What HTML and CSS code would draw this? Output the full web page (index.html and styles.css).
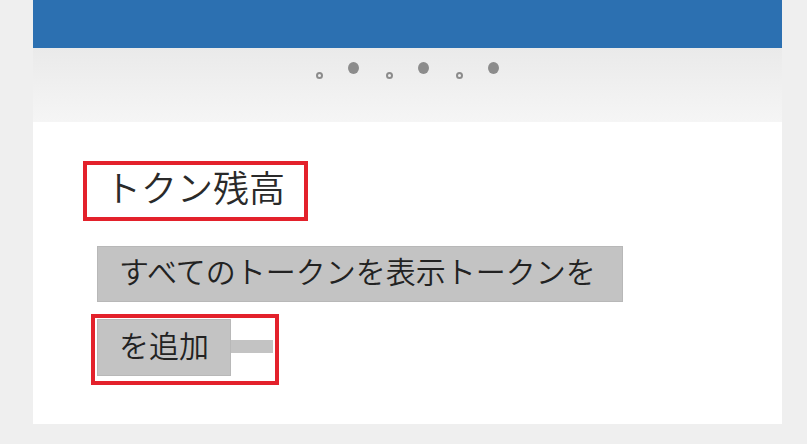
FILE: index.html
```html
<!DOCTYPE html>
<html lang="ja">
<head>
<meta charset="UTF-8">
<meta name="viewport" content="width=device-width, initial-scale=1.0">
<title>トークン残高</title>
<link rel="stylesheet" href="styles.css">
</head>
<body>
    <div class="page">
        <div class="banner"></div>
        <div class="pager">
            <span class="dot dot-empty"></span>
            <span class="dot dot-full"></span>
            <span class="dot dot-empty"></span>
            <span class="dot dot-full"></span>
            <span class="dot dot-empty"></span>
            <span class="dot dot-full"></span>
        </div>
        <div class="card">
            <h2 class="card-title">トクン残高</h2>
            <div class="actions">
                <button class="btn btn-wide">すべてのトークンを表示トークンを</button>
                <div class="marked">
                    <button class="btn">を追加</button>
                    <span class="btn-tail"></span>
                </div>
            </div>
        </div>
    </div>
</body>
</html>
```

FILE: styles.css
```css
body {
    margin: 0;
    background-color: #efefef;
    font-family: "Noto Sans CJK JP", "Noto Sans", sans-serif;
    color: #2a2a2a;
}
.page {
    width: 749px;
    margin-left: 33px;
}
.banner {
    height: 48px;
    background-color: #2c70b1;
}
.pager {
    height: 74px;
    display: flex;
    justify-content: center;
    background: linear-gradient(#eaeaea, #f5f5f5);
}
.dot {
    display: block;
    border-radius: 50%;
    box-sizing: border-box;
}
.dot-empty {
    width: 7px;
    height: 7px;
    margin-top: 24px;
    margin-right: 25px;
    border: 2px solid #8c8c8c;
}
.dot-full {
    width: 11px;
    height: 12px;
    margin-top: 14px;
    margin-right: 27px;
    background-color: #8c8c8c;
}
.dot-full:last-child {
    margin-right: 0;
}
.card {
    background-color: #fff;
    padding: 39px 50px 39px 50px;
}
.card-title {
    display: inline-block;
    margin: 0;
    border: 4px solid #e3212b;
    padding: 0 19px 10px 18px;
    font-size: 36px;
    font-weight: 350;
    line-height: 42px;
    color: #2a2a2a;
}
.actions {
    margin: 25px 0 0 8px;
}
.btn {
    display: block;
    font-family: inherit;
    font-size: 30px;
    font-weight: 350;
    color: #222;
    background-color: #c3c3c3;
    border: 1px solid #b8b8b8;
    padding: 0 21px 8px 21px;
    height: 57px;
    line-height: 46px;
    margin: 0;
}
.btn-wide {
    width: 526px;
    height: 56px;
    margin-left: 6px;
    text-align: left;
    white-space: nowrap;
}
.marked {
    display: inline-flex;
    align-items: flex-start;
    margin-top: 12px;
    border: 4px solid #e3212b;
    padding: 1px 2px 5px 2px;
}
.marked .btn {
    width: 134px;
}
.btn-tail {
    display: block;
    width: 42px;
    height: 13px;
    margin-top: 21px;
    background-color: #c3c3c3;
}
```
